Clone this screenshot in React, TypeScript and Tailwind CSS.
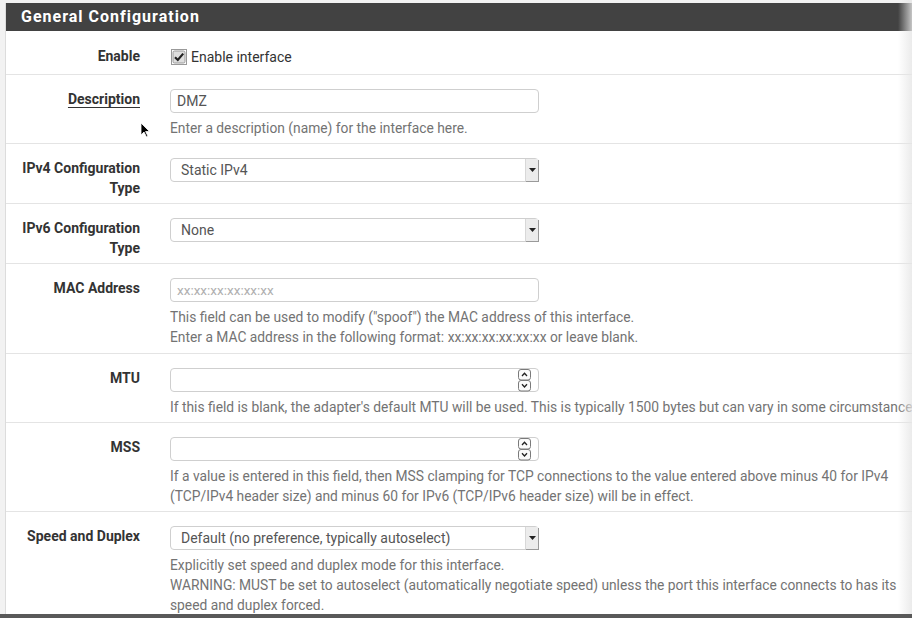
import React from "react";

function SelectBox({ value }: { value: string }) {
  return (
    <div className="relative w-[369px] h-[24px] border border-[#cfcfcf] rounded-[4px] bg-white flex items-center pl-[10px] text-[14px] text-[#555]">
      <span>{value}</span>
      <div className="absolute right-[0px] top-[0px] h-[22px] w-[13px] bg-[#ececec] border-l border-[#d8d8d8] shadow-[1px_1px_0_#9a9a9a] flex items-center justify-center">
        <svg width="7" height="4" viewBox="0 0 7 4">
          <path d="M0 0 L7 0 L3.5 4 Z" fill="#222" />
        </svg>
      </div>
    </div>
  );
}

function TextInput({ value, placeholder }: { value?: string; placeholder?: string }) {
  return (
    <div className="w-[369px] h-[24px] border border-[#cfcfcf] rounded-[4px] bg-white flex items-center pl-[6px]">
      {value ? (
        <span className="text-[#555] text-[14px]">{value}</span>
      ) : (
        <span className="text-[#b0b0b0] text-[13.5px]">{placeholder}</span>
      )}
    </div>
  );
}

function NumberInput() {
  return (
    <div className="relative w-[369px] h-[24px] border border-[#cfcfcf] rounded-[4px] bg-white">
      <svg className="absolute right-[7px] top-[0px]" width="13" height="23" viewBox="0 0 13 23">
        <rect x="0.5" y="0.5" width="12" height="10.5" rx="2.5" fill="#fafafa" stroke="#7a7a7a" />
        <rect x="0.5" y="11.5" width="12" height="10.5" rx="2.5" fill="#fafafa" stroke="#7a7a7a" />
        <path d="M4 7 L6.5 4.3 L9 7" fill="none" stroke="#222" strokeWidth="1.3" />
        <path d="M4 15.3 L6.5 18 L9 15.3" fill="none" stroke="#222" strokeWidth="1.3" />
      </svg>
    </div>
  );
}

function Row({
  label,
  children,
  underline,
  first,
  pb = "pb-[5px]",
}: {
  label: React.ReactNode;
  children: React.ReactNode;
  underline?: boolean;
  first?: boolean;
  pb?: string;
}) {
  return (
    <div className={`flex pt-[14px] ${pb} ${first ? "" : "border-t border-[#e4e4e4]"}`}>
      <div className="w-[134px] text-right text-[14px] font-bold text-[#333] leading-[20px] pl-[10px]">
        <span className={underline ? "underline underline-offset-[3px]" : ""}>{label}</span>
      </div>
      <div className="ml-[30px] w-[762px]">{children}</div>
    </div>
  );
}

function Help({ children }: { children: React.ReactNode }) {
  return <div className="mt-[5px] text-[13.8px] leading-[20px] text-[#737373]">{children}</div>;
}

export default function App() {
  return (
    <div className="relative w-[912px] h-[618px] overflow-hidden bg-[#f2f2f2] font-['Roboto',sans-serif]">
      <div className="ml-[5px] mt-[3px] w-[935px] bg-white border-l border-[#dcdcdc]">
        <div className="h-[28px] bg-[#424242] text-white font-bold text-[16px] tracking-[1px] pl-[15px] flex items-center">
          General Configuration
        </div>

        <Row label={<span className="inline-block pt-[1px]">Enable</span>} first>
          <div className="h-[24px] flex items-center text-[14px] text-[#333]">
            <svg width="16" height="16" viewBox="0 0 16 16" className="ml-[1px] mr-[4px]">
              <rect x="0.5" y="0.5" width="15" height="15" fill="none" stroke="#333" strokeDasharray="1 1" />
              <rect x="2" y="2" width="12" height="12" rx="1.5" fill="#dedede" stroke="#9a9a9a" />
              <path d="M4 8.2 L6.8 11 L12.2 4.6" fill="none" stroke="#222" strokeWidth="2.2" />
            </svg>
            <span>Enable interface</span>
          </div>
        </Row>

        <Row label="Description" underline>
          <TextInput value="DMZ" />
          <Help>Enter a description (name) for the interface here.</Help>
        </Row>

        <Row label="IPv4 Configuration Type">
          <SelectBox value="Static IPv4" />
        </Row>

        <Row label="IPv6 Configuration Type">
          <SelectBox value="None" />
        </Row>

        <Row label="MAC Address" pb="pb-[6px]">
          <TextInput placeholder="xx:xx:xx:xx:xx:xx" />
          <Help>
            This field can be used to modify ("spoof") the MAC address of this interface.
            <br />
            Enter a MAC address in the following format: xx:xx:xx:xx:xx:xx or leave blank.
          </Help>
        </Row>

        <Row label="MTU">
          <NumberInput />
          <Help>
            <span className="whitespace-nowrap">
              If this field is blank, the adapter's default MTU will be used. This is typically 1500 bytes but can vary in some circumstances.
            </span>
          </Help>
        </Row>

        <Row label="MSS">
          <NumberInput />
          <Help>
            If a value is entered in this field, then MSS clamping for TCP connections to the value entered above minus 40 for IPv4
            <br />
            (TCP/IPv4 header size) and minus 60 for IPv6 (TCP/IPv6 header size) will be in effect.
          </Help>
        </Row>

        <Row label="Speed and Duplex">
          <SelectBox value="Default (no preference, typically autoselect)" />
          <Help>
            Explicitly set speed and duplex mode for this interface.
            <br />
            WARNING: MUST be set to autoselect (automatically negotiate speed) unless the port this interface connects to has its
            <br />
            speed and duplex forced.
          </Help>
        </Row>
      </div>

      <div className="absolute right-0 top-0 h-full w-[14px] bg-gradient-to-r from-transparent to-[#e6e6e6]/80" />
      <div className="absolute left-0 bottom-0 w-full h-[4px] bg-[#595959]" />
      <svg className="absolute left-[140px] top-[122px]" width="10" height="16" viewBox="0 0 10 16">
        <path d="M1 1 L1 13 L4 10 L6.5 15 L8 14.3 L5.6 9.5 L9.5 9.5 Z" fill="#000" stroke="#fff" strokeWidth="0.8" />
      </svg>
    </div>
  );
}
